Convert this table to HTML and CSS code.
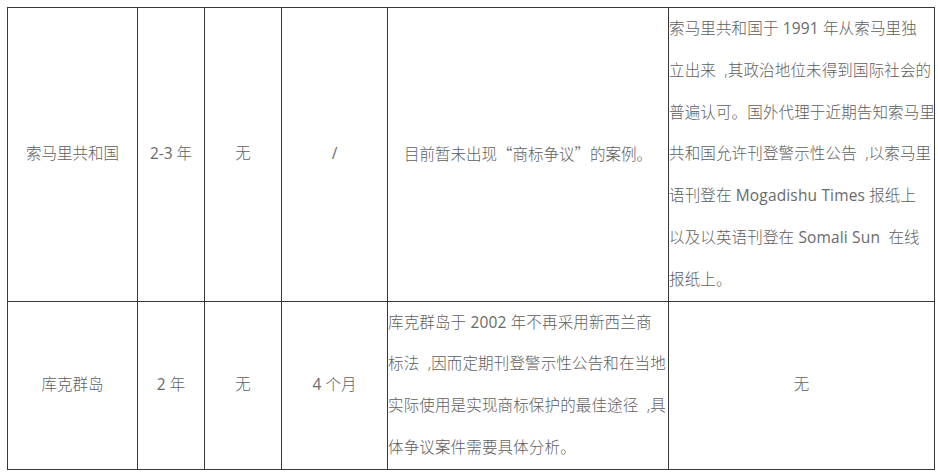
FILE: index.html
```html
<!DOCTYPE html>
<html lang="zh-CN">
<head>
<meta charset="utf-8">
<title>商标争议</title>
<link rel="stylesheet" href="styles.css">
</head>
<body>
<table class="grid">
  <colgroup>
    <col class="c1"><col class="c2"><col class="c3"><col class="c4"><col class="c5"><col class="c6">
  </colgroup>
  <tbody>
    <tr>
      <td class="center">索马里共和国</td>
      <td class="center"><span class="lat">2-3</span> 年</td>
      <td class="center">无</td>
      <td class="center"><span class="lat">/</span></td>
      <td class="center">目前暂未出现<span class="fw">“</span>商标争议<span class="fw">”</span>的案例。</td>
      <td class="left">索马里共和国于 <span class="lat">1991</span> 年从索马里独<br>立出来&nbsp; ,其政治地位未得到国际社会的<br>普遍认可。国外代理于近期告知索马里<br>共和国允许刊登警示性公告&nbsp; ,以索马里<br>语刊登在 <span class="lat">Mogadishu Times</span> 报纸上<br>以及以英语刊登在 <span class="lat">Somali Sun</span>&nbsp; 在线<br>报纸上。</td>
    </tr>
    <tr>
      <td class="center">库克群岛</td>
      <td class="center"><span class="lat">2</span> 年</td>
      <td class="center">无</td>
      <td class="center"><span class="lat">4</span> 个月</td>
      <td class="left">库克群岛于 <span class="lat">2002</span> 年不再采用新西兰商<br>标法&nbsp; ,因而定期刊登警示性公告和在当地<br>实际使用是实现商标保护的最佳途径&nbsp; ,具<br>体争议案件需要具体分析。</td>
      <td class="center">无</td>
    </tr>
  </tbody>
</table>
</body>
</html>
```
FILE: styles.css
```css
html, body {
  margin: 0;
  padding: 0;
  background: #ffffff;
}

body {
  padding: 7px 0 0 7px;
  font-family: "Open Sans", "Noto Sans CJK SC", sans-serif;
  font-size: 15.5px;
  font-weight: 300;
  color: #5e5e5e;
}

.grid {
  border-collapse: collapse;
  table-layout: fixed;
  width: 928px;
}

.c1 { width: 130px; }
.c2 { width: 67px; }
.c3 { width: 77px; }
.c4 { width: 106px; }
.c5 { width: 281px; }
.c6 { width: 266px; }

.grid td {
  border: 1px solid #383838;
  padding: 0;
  line-height: 41.8px;
  vertical-align: middle;
  white-space: nowrap;
}

.center {
  text-align: center;
}

.left {
  text-align: left;
  letter-spacing: 0.15px;
  overflow: visible;
}

.lat {
  font-weight: 400;
  color: #6a6a6a;
}

.fw {
  font-family: "Noto Sans CJK SC", sans-serif;
}
```
